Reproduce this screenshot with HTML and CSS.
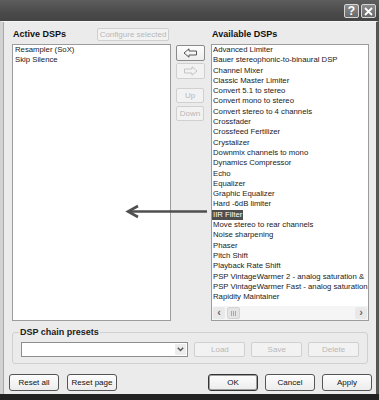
FILE: index.html
```html
<html>
<head>
    <link rel="stylesheet" href="styles.css">
</head>
<body>
<div class="window">
    <div class="titlebar">
        <span class="tb-btn">?</span>
        <span class="tb-btn">
            <svg width="9" height="9" viewBox="0 0 9 9"><path d="M1 1L8 8M8 1L1 8" stroke="#fff" stroke-width="1.8"/></svg>
        </span>
    </div>
    <div class="body">
        <div class="dsp-grid">
            <div class="col-head">
                <h2>Active DSPs</h2>
                <button class="btn off cfg">Configure selected</button>
            </div>
            <div></div>
            <div class="col-head">
                <h2>Available DSPs</h2>
            </div>

            <ul class="list">
                <li>Resampler (SoX)</li>
                <li>Skip Silence</li>
            </ul>

            <div class="mid">
                <button class="btn arrow on-light">
                    <svg width="15" height="10" viewBox="0 0 15 10"><path d="M1 5L6 0.8V3H13.5V7H6V9.2Z" fill="none" stroke="#555" stroke-width="1"/></svg>
                </button>
                <button class="btn arrow off">
                    <svg width="15" height="10" viewBox="0 0 15 10"><path d="M14 5L9 0.8V3H1.5V7H9V9.2Z" fill="none" stroke="#c4c4c4" stroke-width="1"/></svg>
                </button>
                <button class="btn off updown up">Up</button>
                <button class="btn off updown down">Down</button>
            </div>

            <div class="list avail">
                <ul>
                    <li>Advanced Limiter</li>
                    <li>Bauer stereophonic-to-binaural DSP</li>
                    <li>Channel Mixer</li>
                    <li>Classic Master Limiter</li>
                    <li>Convert 5.1 to stereo</li>
                    <li>Convert mono to stereo</li>
                    <li>Convert stereo to 4 channels</li>
                    <li>Crossfader</li>
                    <li>Crossfeed Fertilizer</li>
                    <li>Crystalizer</li>
                    <li>Downmix channels to mono</li>
                    <li>Dynamics Compressor</li>
                    <li>Echo</li>
                    <li>Equalizer</li>
                    <li>Graphic Equalizer</li>
                    <li>Hard -6dB limiter</li>
                    <li><span class="sel">IIR Filter</span></li>
                    <li>Move stereo to rear channels</li>
                    <li>Noise sharpening</li>
                    <li>Phaser</li>
                    <li>Pitch Shift</li>
                    <li>Playback Rate Shift</li>
                    <li>PSP VintageWarmer 2 - analog saturation &amp;</li>
                    <li>PSP VintageWarmer Fast - analog saturation</li>
                    <li>Rapidity Maintainer</li>
                </ul>
                <div class="hscroll">
                    <span class="sb-btn">&lsaquo;</span>
                    <span class="thumb"><i></i><i></i><i></i></span>
                    <span class="sb-track"></span>
                    <span class="sb-btn">&rsaquo;</span>
                </div>
            </div>
        </div>

        <fieldset class="presets">
            <legend>DSP chain presets</legend>
            <div class="preset-row">
                <div class="combo">
                    <span class="drop">
                        <svg width="7" height="5" viewBox="0 0 7 5"><path d="M0.8 0.8L3.5 3.6L6.2 0.8" fill="none" stroke="#555" stroke-width="1.4"/></svg>
                    </span>
                </div>
                <button class="btn off pbtn">Load</button>
                <button class="btn off pbtn">Save</button>
                <button class="btn off pbtn">Delete</button>
            </div>
        </fieldset>

        <div class="footer">
            <button class="btn on fbtn">Reset all</button>
            <button class="btn on fbtn">Reset page</button>
            <div class="right-group">
                <button class="btn on fbtn default">OK</button>
                <button class="btn on fbtn">Cancel</button>
                <button class="btn on fbtn">Apply</button>
            </div>
        </div>
    </div>
    <div class="bottom-bar"></div>

    <svg class="pointer" width="90" height="20" viewBox="0 0 90 20">
        <path d="M5 9.5H84" stroke="#4f4f4f" stroke-width="2.6"/>
        <path d="M15 4L5 9.5L15 15" fill="none" stroke="#4f4f4f" stroke-width="2.6" stroke-linejoin="miter"/>
    </svg>
</div>
</body>
</html>
```

FILE: styles.css
```css
body {
    margin: 0;
    padding: 0;
    font-family: "Liberation Sans", Arial, sans-serif;
    font-size: 8px;
    color: #1a1a1a;
}

.window {
    width: 379px;
    height: 400px;
    display: flex;
    flex-direction: column;
    position: relative;
    background: #ebebeb;
    overflow: hidden;
}

.titlebar {
    height: 21px;
    flex: none;
    box-sizing: border-box;
    padding: 4px 3px 0 0;
    display: flex;
    justify-content: flex-end;
    align-items: flex-start;
    gap: 2px;
    background: linear-gradient(#5e5e5e, #4a4a4a 60%, #444);
}

.tb-btn {
    width: 15px;
    height: 14px;
    box-sizing: border-box;
    border: 1px solid #d6d6d6;
    border-radius: 2px;
    background: linear-gradient(#8c8c8c, #6a6a6a);
    color: #fff;
    font: bold 12px "Liberation Sans", Arial, sans-serif;
    line-height: 12px;
    display: flex;
    align-items: center;
    justify-content: center;
}

.body {
    flex: 1;
    border-top: 1px solid #f6f6f6;
    border-left: 3px solid #d2d2d2;
    border-right: 3px solid #555;
    box-shadow: inset 1px 0 #a9a9a9;
    padding: 0 4px 3px 9px;
}

.dsp-grid {
    margin-top: 6px;
    display: grid;
    grid-template-columns: 159px 40px 158px;
    grid-template-rows: 16px 277px;
}

.col-head {
    height: 13px;
    display: flex;
    align-items: center;
}

.col-head h2 {
    margin: 0 0 0 1px;
    font-size: 9px;
    font-weight: bold;
    line-height: 13px;
    color: #111;
}

.col-head:last-child h2 {
    margin-left: 0;
}

.btn {
    box-sizing: border-box;
    font-family: "Liberation Sans", Arial, sans-serif;
    font-size: 8px;
    padding: 0;
    display: flex;
    align-items: center;
    justify-content: center;
}

.btn.off {
    color: #b8b8b8;
    border: 1px solid #d0d0d0;
    border-radius: 2px;
    background: #f2f2f2;
}

.btn.on {
    color: #111;
    border: 1px solid #555;
    border-radius: 3px;
    background: linear-gradient(#fdfdfd, #ececec);
}

.btn.on-light {
    border: 1px solid #8a8a8a;
    border-radius: 2px;
    background: linear-gradient(#fdfdfd, #ededed);
}

.btn.default {
    border-color: #333;
    box-shadow: inset 0 0 0 1px #a0a0a0;
}

.cfg {
    width: 72px;
    height: 13px;
    margin-left: auto;
    margin-right: 2px;
}

.list {
    margin: 0;
    padding: 0 0 0 2px;
    list-style: none;
    border: 1px solid #9c9c9c;
    background: #fff;
    overflow: hidden;
    font-size: 7.75px;
}

.list li {
    line-height: 10.3px;
    white-space: nowrap;
}

.mid {
    display: flex;
    flex-direction: column;
    padding-left: 5px;
    padding-top: 1px;
}

.arrow {
    width: 29px;
    height: 16px;
}

.arrow + .arrow {
    margin-top: 2px;
}

.updown {
    width: 28px;
    height: 15px;
}

.up {
    margin-top: 9px;
}

.down {
    margin-top: 3px;
}

.avail {
    padding: 0;
    display: flex;
    flex-direction: column;
}

.avail ul {
    flex: 1;
    margin: 0;
    padding: 0 0 0 1px;
    list-style: none;
    overflow: hidden;
}

.sel {
    background: #4e4e4e;
    color: #fff;
    padding: 0 1px;
    margin-left: -1px;
    display: inline-block;
}

.hscroll {
    height: 14px;
    flex: none;
    display: flex;
    align-items: center;
    padding: 0 1px;
    background: #f5f5f5;
}

.sb-btn {
    width: 12px;
    height: 12px;
    border-radius: 2px;
    background: #e9e9e9;
    color: #6a6a6a;
    font-size: 11px;
    font-weight: bold;
    line-height: 11px;
    text-align: center;
}

.thumb {
    width: 13px;
    height: 12px;
    margin-left: 2px;
    box-sizing: border-box;
    border: 1px solid #d4d4d4;
    border-radius: 2px;
    background: #e4e4e4;
    display: flex;
    align-items: center;
    justify-content: center;
    gap: 1px;
}

.thumb i {
    width: 1px;
    height: 5px;
    background: #a8a8a8;
}

.sb-track {
    flex: 1;
}

.presets {
    margin: 6px 4px 0 0;
    padding: 4px 8px 6px 8px;
    border: 1px solid #d0d0d0;
    border-radius: 3px;
    min-width: 0;
}

.presets legend {
    font-size: 9px;
    font-weight: bold;
    line-height: 11px;
    padding: 0 1px;
    margin-left: -2px;
    color: #222;
}

.preset-row {
    display: flex;
    gap: 6px;
}

.combo {
    width: 168px;
    height: 15px;
    box-sizing: border-box;
    border: 1px solid #8e8e8e;
    background: #fff;
    display: flex;
    justify-content: flex-end;
    align-items: center;
    padding-right: 1px;
}

.drop {
    width: 11px;
    height: 11px;
    background: #ececec;
    border-radius: 1px;
    display: flex;
    align-items: center;
    justify-content: center;
}

.pbtn {
    width: 51px;
    height: 15px;
}

.footer {
    margin: 10px 0 0 -3px;
    display: flex;
    gap: 8px;
}

.right-group {
    margin-left: auto;
    display: flex;
    gap: 7px;
}

.fbtn {
    width: 50px;
    height: 17px;
}

.bottom-bar {
    height: 6px;
    flex: none;
    background: #222;
}

.pointer {
    position: absolute;
    left: 123px;
    top: 202px;
}
```
